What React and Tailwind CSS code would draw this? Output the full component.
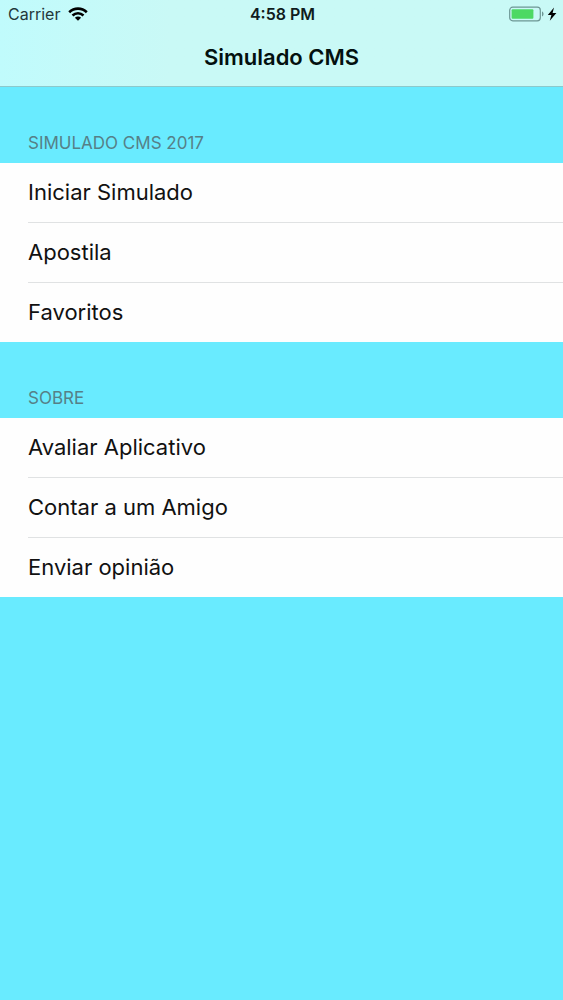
import React from "react";

const sections = [
  {
    title: "Simulado CMS 2017",
    items: ["Iniciar Simulado", "Apostila", "Favoritos"],
  },
  {
    title: "Sobre",
    items: ["Avaliar Aplicativo", "Contar a um Amigo", "Enviar opinião"],
  },
];

const WifiIcon = () => (
  <svg viewBox="0 0 20 14" className="w-5 h-3.5" fill="none" stroke="#000" strokeWidth="2.6">
    <path d="M1.2 5.2C6.2 0.4 13.8 0.4 18.8 5.2" />
    <path d="M4.5 8.5C7.7 5.5 12.3 5.5 15.5 8.5" />
    <path d="M10 13.8L6.9 10.8C8.7 9.2 11.3 9.2 13.1 10.8Z" fill="#000" stroke="none" />
  </svg>
);

const BatteryIcon = () => (
  <svg viewBox="0 0 48 16" className="w-12 h-4">
    <rect x="0.7" y="1.2" width="30.6" height="13.6" rx="3" fill="none" stroke="#6d9694" strokeWidth="1.2" />
    <rect x="2.6" y="3.2" width="21.8" height="9.6" rx="1" fill="#4cd964" />
    <path d="M33 5.6C35 6.2 35 9.8 33 10.4Z" fill="#6d9694" />
    <path d="M45 1.4L38.8 8.9H42.4L40.8 14.8L47.4 7.1H43.6Z" fill="#000" />
  </svg>
);

const StatusBar = () => (
  <div className="grid grid-cols-3 items-center h-7 pl-2 pr-1.5 text-base">
    <div className="flex items-center gap-2 text-[#24383a]">
      <span>Carrier</span>
      <WifiIcon />
    </div>
    <span className="text-center font-semibold text-[#101c1c]">4:58 PM</span>
    <div className="flex justify-end">
      <BatteryIcon />
    </div>
  </div>
);

const Section = ({ title, items }) => (
  <section>
    <h2 className="h-[76px] px-7 pt-11 text-[17px] leading-6 uppercase text-[#568087]">
      {title}
    </h2>
    <ul className="bg-[#fefefe]">
      {items.map((item) => (
        <li key={item} className="group pl-7">
          <button
            type="button"
            className="block w-full h-[60px] border-b border-[#e0e2e3] group-last:h-[59px] group-last:border-b-0 text-left text-[22px] text-[#111]"
          >
            {item}
          </button>
        </li>
      ))}
    </ul>
  </section>
);

const App = () => {
  return (
    <div className="min-h-screen bg-[#69ebff] font-['Inter',sans-serif]">
      <header className="bg-linear-to-r from-[#c0fbfc] to-[#c9f9f6] to-30% border-b border-[#8cc9cc]">
        <StatusBar />
        <h1 className="h-[58px] leading-[58px] text-center text-[22px] font-semibold text-[#03100f]">
          Simulado CMS
        </h1>
      </header>
      <main>
        {sections.map((section) => (
          <Section key={section.title} title={section.title} items={section.items} />
        ))}
      </main>
    </div>
  );
};

export default App;
